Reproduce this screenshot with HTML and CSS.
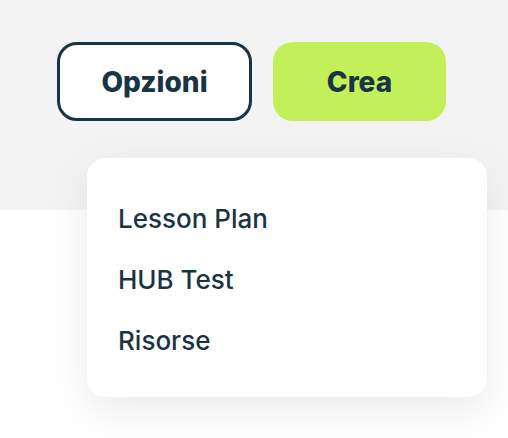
FILE: index.html
```html
<!DOCTYPE html>
<html lang="it">
<head>
    <meta charset="UTF-8">
    <meta name="viewport" content="width=device-width, initial-scale=1.0">
    <title>Crea</title>
    <link rel="stylesheet" href="styles.css">
</head>
<body>

    <!-- barra superiore con i pulsanti -->
    <div class="top-bar">
        <div class="actions">
            <button class="btn btn-outline">Opzioni</button>
            <button class="btn btn-primary">Crea</button>
        </div>
    </div>

    <!-- menu a tendina del pulsante Crea -->
    <div class="dropdown">
        <a class="dropdown-item" href="#">Lesson Plan</a>
        <a class="dropdown-item" href="#">HUB Test</a>
        <a class="dropdown-item" href="#">Risorse</a>
    </div>

</body>
</html>
```

FILE: styles.css
```css
body {
    margin: 0;
    background: #fff;
    font-family: "Inter", "Liberation Sans", sans-serif;
    color: #1a3445;
}

.top-bar {
    height: 210px;
    background: #f2f3f2;
    box-sizing: border-box;
    padding: 42px 0 0 57px;
}

.actions {
    display: flex;
    gap: 21px;
}

.btn {
    height: 79px;
    border-radius: 20px;
    font-family: inherit;
    font-size: 28px;
    font-weight: 800;
    color: #1a3445;
    cursor: pointer;
}

.btn-outline {
    width: 195px;
    background: #fff;
    border: 3px solid #1a3445;
}

.btn-primary {
    width: 173px;
    background: #c3ef58;
    border: none;
}

/* il menu sta sopra al contenuto */
.dropdown {
    position: absolute;
    top: 158px;
    left: 87px;
    width: 400px;
    height: 239px;
    box-sizing: border-box;
    padding: 30px 31px;
    background: #fff;
    border-radius: 18px;
    box-shadow: 0 14px 40px rgba(0, 0, 0, 0.08);
    display: flex;
    flex-direction: column;
}

.dropdown-item {
    display: block;
    height: 61px;
    line-height: 61px;
    font-size: 26px;
    font-weight: 500;
    color: #1a3445;
    text-decoration: none;
}
```
